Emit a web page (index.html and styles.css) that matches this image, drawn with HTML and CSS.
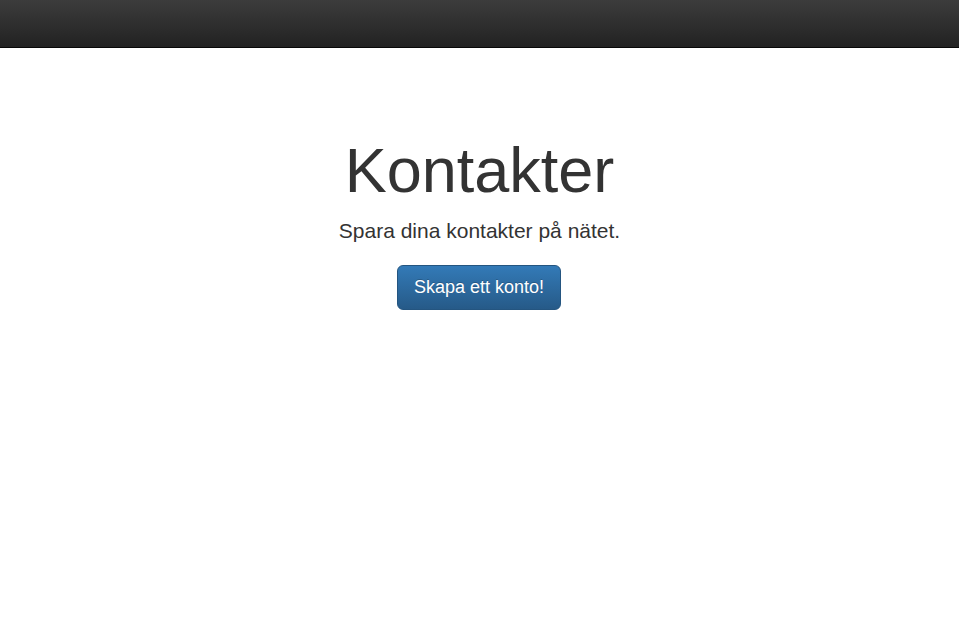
FILE: index.html
```html
<!DOCTYPE html>
<html lang="sv">
<head>
<meta charset="utf-8">
<title>Kontakter</title>
<link rel="stylesheet" href="styles.css">
</head>
<body>
<nav class="navbar"></nav>
<main class="hero">
  <h1 class="hero-title">Kontakter</h1>
  <p class="hero-lead">Spara dina kontakter på nätet.</p>
  <a class="btn-primary" href="#">Skapa ett konto!</a>
</main>
</body>
</html>
```
FILE: styles.css
```css
html, body {
  margin: 0;
  padding: 0;
  background: #fff;
  font-family: "Liberation Sans", Arial, Helvetica, sans-serif;
  color: #333;
}
.navbar {
  height: 47px;
  background: linear-gradient(to bottom, #3c3c3c 0%, #222 100%);
  border-bottom: 1px solid #080808;
}
.hero {
  display: flex;
  flex-direction: column;
  align-items: center;
  padding-top: 88px;
}
.hero-title {
  margin: 0;
  font-size: 63px;
  font-weight: 400;
  line-height: 69px;
  color: #333;
}
.hero-lead {
  margin: 11px 0 0;
  font-size: 21px;
  line-height: 30px;
  font-weight: 400;
}
.btn-primary {
  margin-top: 19px;
  margin-left: -1px;
  display: inline-block;
  box-sizing: border-box;
  width: 164px;
  height: 45px;
  line-height: 43px;
  text-align: center;
  font-size: 18px;
  color: #fff;
  text-decoration: none;
  text-shadow: 0 -1px 0 rgba(0, 0, 0, 0.2);
  border-radius: 6px;
  border: 1px solid #245580;
  background: linear-gradient(to bottom, #337ab7 0%, #265a88 100%);
}
```
